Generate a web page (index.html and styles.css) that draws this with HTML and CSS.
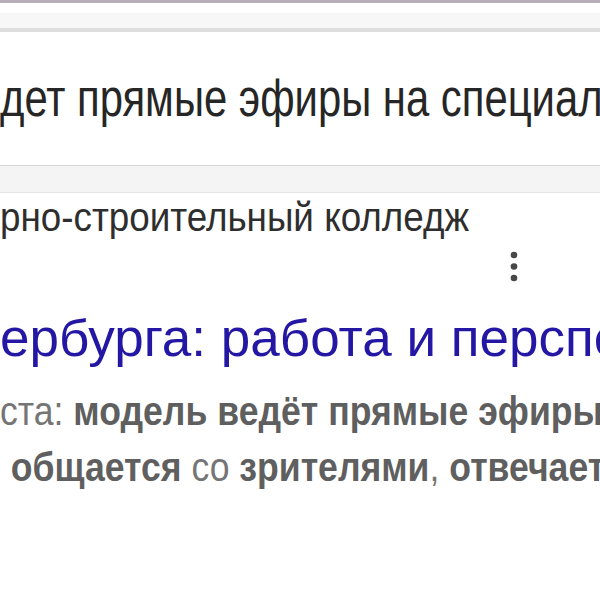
FILE: index.html
```html
<!DOCTYPE html>
<html lang="ru">

<head>
    <meta charset="UTF-8">
    <title>Поиск</title>
    <link rel="stylesheet" href="styles.css">
</head>

<body>
    <div class="page">
        <div class="top-edge"></div>
        <div class="top-gap"></div>
        <div class="top-band"></div>

        <!-- search field -->
        <div class="query-box">
            <span class="query-text">дет прямые эфиры на специализированных площадках</span>
        </div>
        <div class="query-under"></div>

        <!-- result -->
        <div class="result">
            <div class="cite"><span class="squeeze">рно-строительный колледж</span></div>
            <div class="menu-row">
                <span class="dots">
                    <svg width="8" height="34" viewBox="0 0 8 34">
                        <circle cx="4" cy="5" r="3.3" fill="#474747" />
                        <circle cx="4" cy="16.5" r="3.3" fill="#474747" />
                        <circle cx="4" cy="28" r="3.3" fill="#474747" />
                    </svg>
                </span>
            </div>
            <div class="title"><span class="widen">ербурга: работа и перспективы</span></div>
            <div class="snippet">
                <div class="snip-line">ста: <b>модель ведёт прямые эфиры</b> на площадках</div>
                <div class="snip-line indent"><b>общается</b> со <b>зрителями</b>, <b>отвечает</b> на вопросы</div>
            </div>
        </div>
    </div>
</body>

</html>
```

FILE: styles.css
```css
html,
body {
    margin: 0;
    padding: 0;
    background-color: #ffffff;
}

.page {
    width: 600px;
    height: 600px;
    overflow: hidden;
    font-family: 'Liberation Sans', Arial, sans-serif;
    white-space: nowrap;
}

.top-edge {
    height: 3px;
    background-color: #b7afb7;
}

.top-gap {
    height: 10px;
    background-color: #ffffff;
}

.top-band {
    height: 15px;
    background-color: #f7f7f7;
    border-bottom: 4px solid #dedede;
}

.query-box {
    height: 133px;
    display: flex;
    align-items: center;
    border-bottom: 1px solid #d6d6d6;
    overflow: hidden;
}

.query-text {
    display: inline-block;
    font-size: 51px;
    color: #262626;
    transform: scaleX(0.82);
    transform-origin: left center;
}

.query-under {
    height: 26px;
    background-color: #f4f4f4;
    border-bottom: 1px solid #e4e4e4;
}

.result {
    padding-top: 4px;
}

.cite {
    font-size: 40px;
    line-height: 40px;
    color: #2e2e2e;
}

.squeeze {
    display: inline-block;
    transform: scaleX(0.92);
    transform-origin: left center;
}

.menu-row {
    display: flex;
    align-items: flex-start;
    height: 76px;
    padding-left: 510px;
    box-sizing: border-box;
    padding-top: 13px;
}

.dots svg {
    display: block;
}

.title {
    font-size: 51px;
    line-height: 52px;
    color: #2317a4;
}

.widen {
    display: inline-block;
    transform: scaleX(1.04);
    transform-origin: left center;
}

.snippet {
    margin-top: 18px;
    font-size: 40px;
    line-height: 56px;
    color: #757575;
}

.snip-line {
    transform: scaleX(0.89);
    transform-origin: left center;
}

.snip-line.indent {
    padding-left: 12px;
}

.snip-line b {
    color: #5f5f5f;
}
```
